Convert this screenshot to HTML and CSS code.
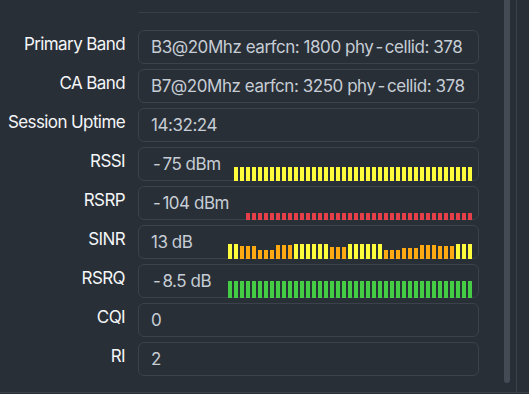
FILE: index.html
```html
<!DOCTYPE html>
<html lang="en">
<head>
    <meta charset="UTF-8">
    <meta name="viewport" content="width=device-width, initial-scale=1.0">
    <title>Cellular Status</title>
    <link rel="stylesheet" href="styles.css">
</head>
<body>
    <div class="screen">
        <div class="panel">
            <div class="rule"></div>
            <div class="row">
                <div class="label">Primary Band</div>
                <div class="field"><span class="value">B3@20Mhz earfcn: 1800 phy<span class="dash">-</span>cellid: 378</span></div>
            </div>
            <div class="row">
                <div class="label">CA Band</div>
                <div class="field"><span class="value">B7@20Mhz earfcn: 3250 phy<span class="dash">-</span>cellid: 378</span></div>
            </div>
            <div class="row">
                <div class="label">Session Uptime</div>
                <div class="field"><span class="value">14:32:24</span></div>
            </div>
            <div class="row">
                <div class="label">RSSI</div>
                <div class="field"><span class="value"><span class="dash">-</span>75 dBm</span><div class="bars" id="rssi"></div></div>
            </div>
            <div class="row">
                <div class="label">RSRP</div>
                <div class="field"><span class="value"><span class="dash">-</span>104 dBm</span><div class="bars" id="rsrp"></div></div>
            </div>
            <div class="row">
                <div class="label">SINR</div>
                <div class="field"><span class="value">13 dB</span><div class="bars" id="sinr"></div></div>
            </div>
            <div class="row">
                <div class="label">RSRQ</div>
                <div class="field"><span class="value"><span class="dash">-</span>8.5 dB</span><div class="bars" id="rsrq"></div></div>
            </div>
            <div class="row">
                <div class="label">CQI</div>
                <div class="field"><span class="value">0</span></div>
            </div>
            <div class="row">
                <div class="label">RI</div>
                <div class="field"><span class="value">2</span></div>
            </div>
        </div>
        <div class="scroll"><div class="thumb"></div></div>
        <div class="edge"></div>
    </div>
    <script>
        function fill(id, bars) {
            const box = document.getElementById(id);
            for (let b of bars) {
                const el = document.createElement('span');
                el.className = 'bar ' + b[0];
                el.style.height = b[1] + 'px';
                box.appendChild(el);
            }
        }

        function repeat(color, height, count) {
            const out = [];
            for (let i = 0; i < count; i++) out.push([color, height]);
            return out;
        }

        fill('rssi', repeat('y', 14, 40));
        fill('rsrp', repeat('r', 7, 38));
        fill('rsrq', repeat('g', 17, 41));
        fill('sinr', [].concat(
            repeat('y', 15, 2),
            repeat('o', 13, 3),
            repeat('o', 9, 3),
            repeat('o', 14, 3),
            repeat('y', 15, 6),
            repeat('o', 12, 3),
            repeat('y', 15, 6),
            repeat('o', 9, 3),
            repeat('o', 11, 3),
            repeat('o', 14, 3),
            repeat('o', 13, 3),
            repeat('y', 15, 3)
        ));
    </script>
</body>
</html>
```

FILE: styles.css
```css
body {
    margin: 0;
    background-color: #292f37;
    font-family: Inter, "Noto Sans", sans-serif;
    overflow: hidden;
}
.screen {
    display: flex;
    height: 392px;
    border-bottom: 1px solid #3a4149;
}
.panel {
    width: 479px;
    padding-top: 12px;
}
.rule {
    margin-left: 138px;
    height: 1px;
    background-color: #373e47;
    margin-bottom: 17px;
}
.row {
    display: grid;
    grid-template-columns: 125px 341px;
    column-gap: 13px;
    height: 34px;
    margin-bottom: 5px;
}
.label {
    font-size: 17px;
    line-height: 20px;
    padding-top: 4px;
    color: #f4f6f8;
    text-align: right;
    letter-spacing: -0.6px;
    white-space: nowrap;
}
.field {
    box-sizing: border-box;
    height: 34px;
    border: 1px solid #3b424c;
    border-radius: 6px;
    padding-left: 12px;
    display: flex;
    align-items: center;
}
.value {
    font-size: 17px;
    color: #c6cdd5;
    letter-spacing: -0.45px;
    white-space: nowrap;
}
.dash {
    margin: 0 2px;
}
.bars {
    margin-left: auto;
    margin-right: 6px;
    margin-bottom: -1px;
    align-self: flex-end;
    display: flex;
    align-items: flex-end;
    gap: 2px;
}
.bar {
    width: 4px;
}
.y { background-color: #fdfd3c; }
.o { background-color: #ffaa12; }
.r { background-color: #e5404a; }
.g { background-color: #44cc44; }
.scroll {
    margin-left: 25px;
    width: 6px;
}
.thumb {
    height: 383px;
    background-color: #444b55;
    border-radius: 0 0 3px 3px;
}
.edge {
    margin-left: 6px;
    width: 1px;
    background-color: #3a4149;
}
```
